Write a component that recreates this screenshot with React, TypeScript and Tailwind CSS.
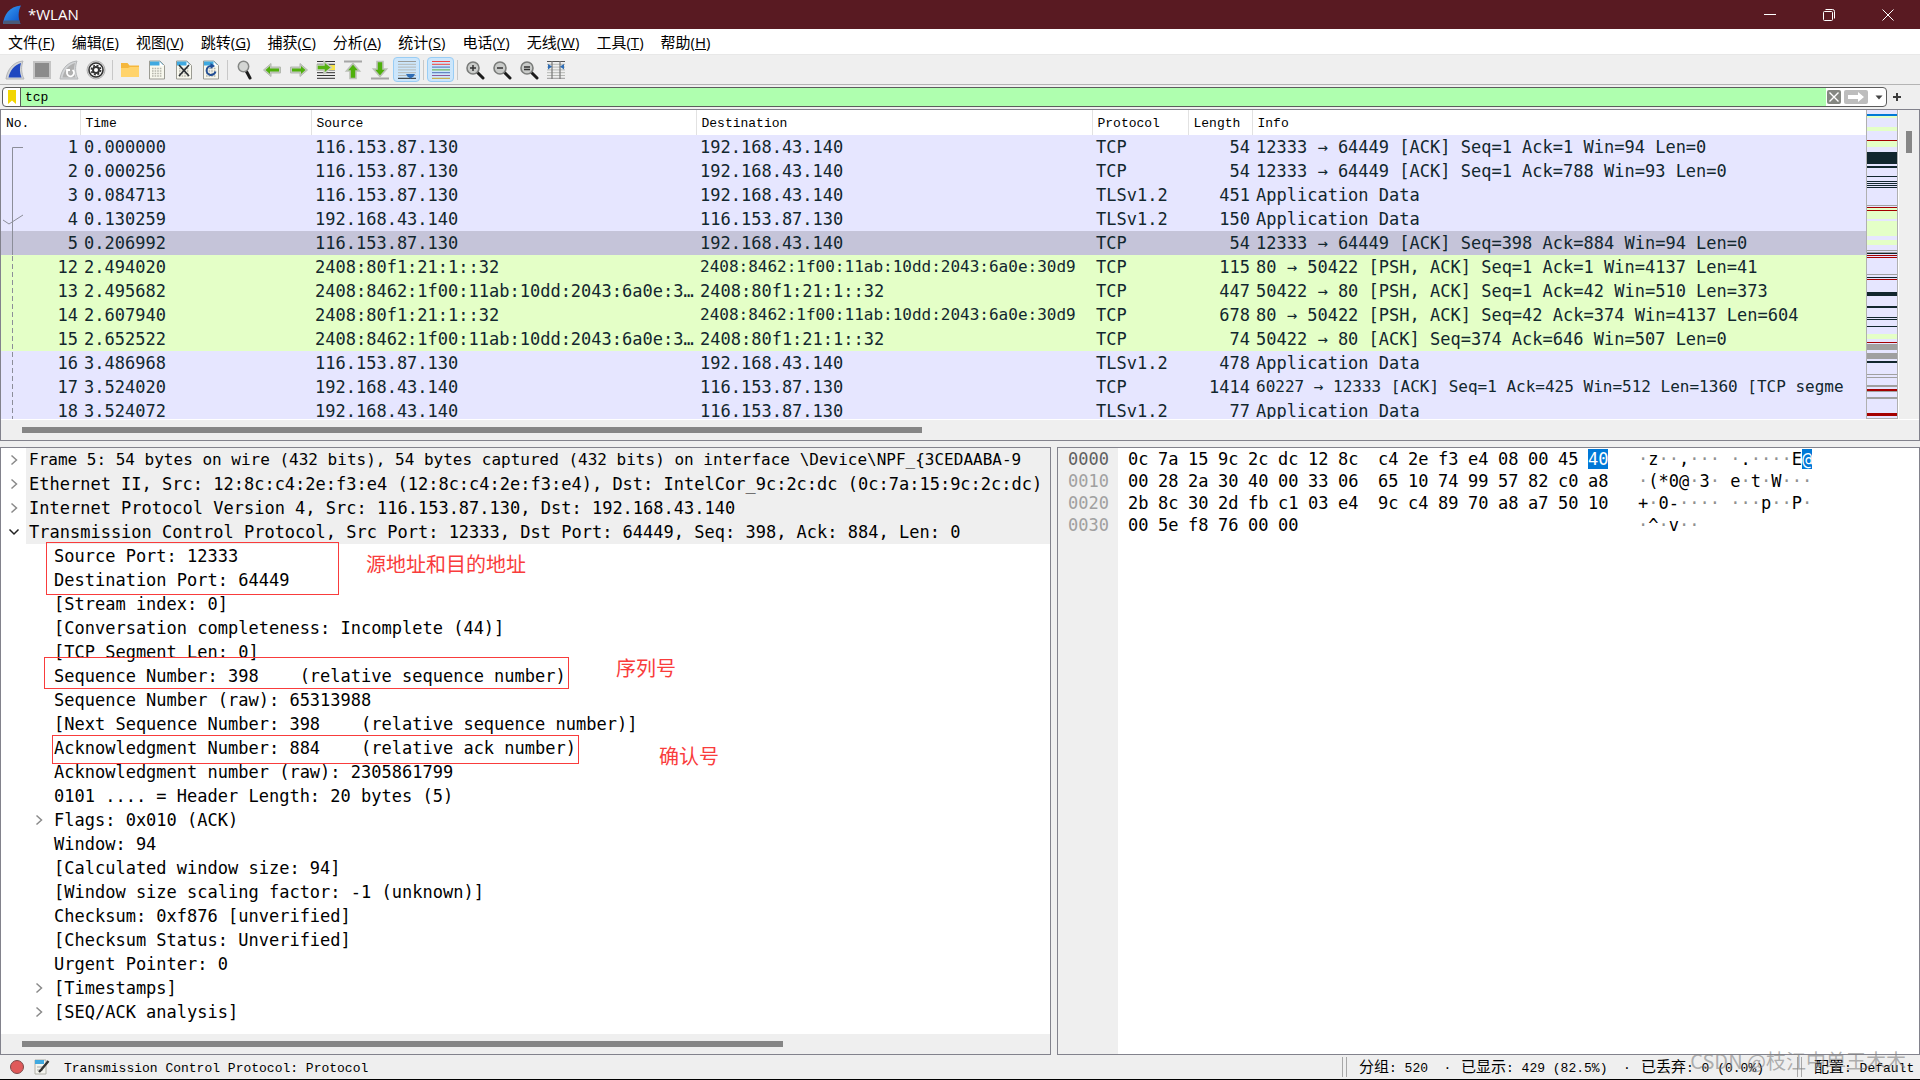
import type { ReactNode } from "react";

const MONO = "font-['DejaVu_Sans_Mono','Noto_Sans_CJK_SC',monospace]";
const SONG = "font-['Liberation_Mono','Noto_Sans_CJK_SC',monospace] text-[13px]";

const menus = [
  ["文件", "F"],
  ["编辑", "E"],
  ["视图", "V"],
  ["跳转", "G"],
  ["捕获", "C"],
  ["分析", "A"],
  ["统计", "S"],
  ["电话", "Y"],
  ["无线", "W"],
  ["工具", "T"],
  ["帮助", "H"],
];

const V4A = "116.153.87.130";
const V4B = "192.168.43.140";
const V6A = "2408:80f1:21:1::32";
const V6B = "2408:8462:1f00:11ab:10dd:2043:6a0e:30d9";
const V6B_CUT = "2408:8462:1f00:11ab:10dd:2043:6a0e:3…";

type Packet = [number, string, string, string, string, number, string];

const packets: Packet[] = [
  [1, "0.000000", V4A, V4B, "TCP", 54, "12333 → 64449 [ACK] Seq=1 Ack=1 Win=94 Len=0"],
  [2, "0.000256", V4A, V4B, "TCP", 54, "12333 → 64449 [ACK] Seq=1 Ack=788 Win=93 Len=0"],
  [3, "0.084713", V4A, V4B, "TLSv1.2", 451, "Application Data"],
  [4, "0.130259", V4B, V4A, "TLSv1.2", 150, "Application Data"],
  [5, "0.206992", V4A, V4B, "TCP", 54, "12333 → 64449 [ACK] Seq=398 Ack=884 Win=94 Len=0"],
  [12, "2.494020", V6A, V6B, "TCP", 115, "80 → 50422 [PSH, ACK] Seq=1 Ack=1 Win=4137 Len=41"],
  [13, "2.495682", V6B_CUT, V6A, "TCP", 447, "50422 → 80 [PSH, ACK] Seq=1 Ack=42 Win=510 Len=373"],
  [14, "2.607940", V6A, V6B, "TCP", 678, "80 → 50422 [PSH, ACK] Seq=42 Ack=374 Win=4137 Len=604"],
  [15, "2.652522", V6B_CUT, V6A, "TCP", 74, "50422 → 80 [ACK] Seq=374 Ack=646 Win=507 Len=0"],
  [16, "3.486968", V4A, V4B, "TLSv1.2", 478, "Application Data"],
  [17, "3.524020", V4B, V4A, "TCP", 1414, "60227 → 12333 [ACK] Seq=1 Ack=425 Win=512 Len=1360 [TCP segme"],
  [18, "3.524072", V4B, V4A, "TLSv1.2", 77, "Application Data"],
];

const rowColor = (no: number) => {
  if (no === 5) return "bg-[#c5c4d9]";
  if (no >= 12 && no <= 15) return "bg-[#e4ffc7]";
  return "bg-[#e6e6ff]";
};

// the longest strings go one size down so they fit their column
const cellSize = (cell: string | number) => {
  const len = String(cell).length;
  return len === 39 || len > 60 ? "text-base" : "text-[17px]";
};

// [level, expander, text]
const tree: [number, string, string][] = [
  [0, ">", "Frame 5: 54 bytes on wire (432 bits), 54 bytes captured (432 bits) on interface \\Device\\NPF_{3CEDAABA-9"],
  [0, ">", "Ethernet II, Src: 12:8c:c4:2e:f3:e4 (12:8c:c4:2e:f3:e4), Dst: IntelCor_9c:2c:dc (0c:7a:15:9c:2c:dc)"],
  [0, ">", "Internet Protocol Version 4, Src: 116.153.87.130, Dst: 192.168.43.140"],
  [0, "v", "Transmission Control Protocol, Src Port: 12333, Dst Port: 64449, Seq: 398, Ack: 884, Len: 0"],
  [1, "", "Source Port: 12333"],
  [1, "", "Destination Port: 64449"],
  [1, "", "[Stream index: 0]"],
  [1, "", "[Conversation completeness: Incomplete (44)]"],
  [1, "", "[TCP Segment Len: 0]"],
  [1, "", "Sequence Number: 398    (relative sequence number)"],
  [1, "", "Sequence Number (raw): 65313988"],
  [1, "", "[Next Sequence Number: 398    (relative sequence number)]"],
  [1, "", "Acknowledgment Number: 884    (relative ack number)"],
  [1, "", "Acknowledgment number (raw): 2305861799"],
  [1, "", "0101 .... = Header Length: 20 bytes (5)"],
  [1, ">", "Flags: 0x010 (ACK)"],
  [1, "", "Window: 94"],
  [1, "", "[Calculated window size: 94]"],
  [1, "", "[Window size scaling factor: -1 (unknown)]"],
  [1, "", "Checksum: 0xf876 [unverified]"],
  [1, "", "[Checksum Status: Unverified]"],
  [1, "", "Urgent Pointer: 0"],
  [1, ">", "[Timestamps]"],
  [1, ">", "[SEQ/ACK analysis]"],
];

const hexRows = [
  ["0000", "0c 7a 15 9c 2c dc 12 8c", "c4 2e f3 e4 08 00 45 40", "·z··,··· ·.····E@"],
  ["0010", "00 28 2a 30 40 00 33 06", "65 10 74 99 57 82 c0 a8", "·(*0@·3· e·t·W···"],
  ["0020", "2b 8c 30 2d fb c1 03 e4", "9c c4 89 70 a8 a7 50 10", "+·0-···· ···p··P·"],
  ["0030", "00 5e f8 76 00 00", "", "·^·v··"],
];

const G = "#e4ffc7";
const D = "#12272e";
const R = "#a40000";
const Y = "#a0a0a0";
// minimap stripes: [y, height, colour]
const stripes: [number, number, string][] = [
  [4, 2, "#0078d7"], [6, 2, G], [17, 4, G], [30, 1, R], [31, 6, G], [42, 12, D], [56, 2, D],
  [66, 1, D], [71, 1, D], [73, 1, D], [75, 1, D], [77, 1, D], [95, 1, Y], [97, 1, R], [98, 2, G],
  [100, 1, R], [101, 8, G], [111, 15, G], [130, 5, G], [140, 1, Y], [142, 1, Y], [143, 1, D],
  [145, 1, R], [147, 1, R], [164, 1, Y], [167, 1, D], [169, 1, R], [182, 4, D], [196, 2, D],
  [207, 1, D], [209, 1, D], [216, 1, D], [224, 5, G], [232, 1, R], [234, 6, Y], [243, 6, Y],
  [251, 2, D], [264, 1, Y], [267, 1, Y], [275, 2, Y], [279, 2, R], [281, 1, Y], [287, 2, Y], [303, 3, R],
];

const Svg = ({ children }: { children: ReactNode }) => (
  <svg viewBox="0 0 20 20" className="size-5" fill="none" aria-hidden="true">
    {children}
  </svg>
);

const Fin = ({ fill }: { fill: string }) => (
  <>
    <path d="M1 19C2 11 7 2 18 1C16 6 16 13 19 19Z" fill="#d2d4d6" stroke="#b4b6b8" strokeWidth="1" strokeLinejoin="round" />
    <path d="M3.500 17.500C5 11 9 5 16 3C14.500 8 14.500 12.500 16.500 17.500Z" fill={fill} />
  </>
);

const Doc = () => (
  <>
    <path d="M2.500 1H13L17.500 5.500V19H2.500Z" fill="#f8f8ee" stroke="#9b9b93" />
    <path d="M3 1.500H13L16 4.500V5.500H3Z" fill="#3fa9e0" />
    <path d="M12.500 1.500V6H17Z" fill="#fff" />
  </>
);

const DocBits = () => (
  <path d="M5 8.500H15M5 11H15M5 13.500H15M5 16H15" stroke="#b5b5ab" strokeWidth="1.500" strokeDasharray="1.600 1" />
);

const Arrow = ({ turn = 0 }: { turn?: number }) => (
  <g transform={`rotate(${turn} 10 10)`} strokeLinejoin="round">
    <path d="M1.500 10L9 3.500V7H18.500V13H9V16.500Z" fill="#c4c9c0" stroke="#b4b9b0" />
    <path d="M3.500 10L8 6V8.500H17V11.500H8V14Z" fill="#4fb00c" />
  </g>
);

const Lens = ({ children }: { children?: ReactNode }) => (
  <>
    <path d="M12.500 12.500L18 18" stroke="#1c1c1c" strokeWidth="3" strokeLinecap="round" />
    <circle cx="8" cy="8" r="6" fill="#c9cbc9" stroke="#7a7c7a" strokeWidth="1.600" />
    {children}
  </>
);

const Lines = ({ colors }: { colors: string[] }) => (
  <>
    {colors.map((c, i) => (
      <path key={i} d={`M1 ${1.5 + i * 2.8}H19`} stroke={c} strokeWidth="1" />
    ))}
  </>
);

const gray = "#a5a5a5";

const tools: { label: string; on?: boolean; sep?: boolean; icon: ReactNode }[] = [
  { label: "开始捕获", icon: <Fin fill="#1f47c0" /> },
  { label: "停止捕获", icon: <rect x="2" y="2" width="16" height="16" fill="#8b8b8b" stroke="#c4c4c4" strokeWidth="2" /> },
  {
    label: "重新开始捕获",
    icon: (
      <>
        <Fin fill="#b0b0b0" />
        <path d="M13.500 10A3.500 3.500 0 1 1 8.500 11M8 13.500V10H11" stroke="#fff" strokeWidth="1.800" />
      </>
    ),
  },
  {
    label: "捕获选项",
    sep: true,
    icon: (
      <>
        <circle cx="10" cy="10" r="9" fill="#d8d8d8" stroke="#b0b0b0" />
        <circle cx="10" cy="10" r="7" fill="#fff" stroke="#333" strokeWidth="1.600" />
        <circle cx="10" cy="10" r="4.600" stroke="#333" strokeWidth="1.600" strokeDasharray="2 1.612" />
        <circle cx="10" cy="10" r="3" fill="#fff" stroke="#333" strokeWidth="2" />
      </>
    ),
  },
  {
    label: "打开",
    icon: (
      <>
        <path d="M1 3H7.500L9.500 5.500H19V17H1Z" fill="#f5b73c" />
        <path d="M1 8H8L10 7H19V17H1Z" fill="#ffd36b" />
      </>
    ),
  },
  { label: "保存", icon: <><Doc /><DocBits /></> },
  { label: "关闭", icon: <><Doc /><DocBits /><path d="M5 5L15 16M15 5L5 16" stroke="#2a2f33" strokeWidth="1.700" /></> },
  {
    label: "重新加载",
    sep: true,
    icon: (
      <>
        <Doc />
        <DocBits />
        <path d="M10 6A4.500 4.500 0 1 0 14.500 11.500" stroke="#234f95" strokeWidth="2" />
        <path d="M9.500 3L14 6L9.500 9Z" fill="#234f95" />
      </>
    ),
  },
  {
    label: "查找分组",
    icon: (
      <>
        <path d="M11.500 11.500L15 18" stroke="#1c1c1c" strokeWidth="3" strokeLinecap="round" />
        <circle cx="8.500" cy="6.500" r="5.200" fill="#d4d6d4" stroke="#858785" strokeWidth="1.500" />
      </>
    ),
  },
  { label: "上一个分组", icon: <Arrow /> },
  { label: "下一个分组", icon: <Arrow turn={180} /> },
  {
    label: "转到分组",
    icon: (
      <>
        <Lines colors={["#333", "#333", "#333", "#333", "#333", "#333", "#333"]} />
        <path d="M12 5H19V10H12Z" fill="#f6e34a" />
        <path d="M1 5H8V1.500L15.500 7.500L8 13.500V10H1Z" fill="#55b212" stroke="#c8cec2" strokeWidth="1.500" />
      </>
    ),
  },
  { label: "第一个分组", icon: <><path d="M1 1.500H19" stroke={gray} strokeWidth="2" /><path d="M10 3.500L16.500 11H13V18.500H7V11H3.500Z" fill="#4fb00c" stroke="#bcc1b8" strokeWidth="1.600" /></> },
  { label: "最后一个分组", icon: <><path d="M1 18.500H19" stroke={gray} strokeWidth="2" /><path d="M10 16.500L16.500 9H13V1.500H7V9H3.500Z" fill="#4fb00c" stroke="#bcc1b8" strokeWidth="1.600" /></> },
  {
    label: "自动滚动",
    on: true,
    sep: true,
    icon: (
      <>
        <Lines colors={["#999b98", "#b6b8b4", "#b6b8b4", "#b6b8b4", "#b6b8b4", "#b6b8b4", "#222"]} />
        <path d="M9 14H18L16.500 16.500L13.500 18.500L10.500 16.500Z" fill="#2f6db5" />
      </>
    ),
  },
  {
    label: "着色分组列表",
    on: true,
    sep: true,
    icon: <Lines colors={["#ef4444", "#ef4444", "#4a6fb5", "#5bae3c", "#4a6fb5", "#8a5a9a", "#c9a227"]} />,
  },
  { label: "放大", icon: <Lens><path d="M8 5V11M5 8H11" stroke="#333" strokeWidth="1.500" /></Lens> },
  { label: "缩小", icon: <Lens><path d="M5 8H11" stroke="#333" strokeWidth="1.500" /></Lens> },
  { label: "正常大小", icon: <Lens><path d="M5 7H11M5 9.500H11" stroke="#333" strokeWidth="1.500" /></Lens> },
  {
    label: "调整列宽",
    icon: (
      <>
        <Lines colors={["#555", "#b6b8b4", "#b6b8b4", "#b6b8b4", "#b6b8b4", "#b6b8b4", "#999"]} />
        <path d="M6 1V19M14 1V19" stroke="#777" strokeWidth="1.200" />
        <path d="M2 4L6 6.500L2 9.500ZM18 4L14 6.500L18 9.500Z" fill="#2f6db5" />
      </>
    ),
  },
];

const TitleBar = () => (
  <header className="flex h-[29px] shrink-0 items-center bg-[#591a22] text-white">
    <svg viewBox="0 0 20 20" className="ml-0.5 size-5" aria-hidden="true">
      <defs>
        <linearGradient id="fin" x1="0" y1="0" x2="1" y2="1">
          <stop offset="0" stopColor="#3aa0f5" />
          <stop offset="1" stopColor="#0a50c8" />
        </linearGradient>
      </defs>
      <path d="M1 19C2 10 7 1.500 19 0.500C16 6 16 13 18.500 19Z" fill="url(#fin)" />
      <path d="M1 19C1.500 17.500 1.800 16.500 2.500 15.500H17.500L18.500 19Z" fill="#4a5a78" />
    </svg>
    <h1 className="ml-1.5 flex-1 font-['Open_Sans',sans-serif] text-[15px]">*WLAN</h1>
    <button aria-label="最小化" className="flex h-full w-[59px] items-center justify-center">
      <svg viewBox="0 0 12 12" className="size-3" stroke="#fff" fill="none"><path d="M0 5.500H12" /></svg>
    </button>
    <button aria-label="还原" className="flex h-full w-[59px] items-center justify-center">
      <svg viewBox="0 0 12 12" className="size-3" stroke="#fff" fill="none">
        <rect x="0.500" y="2.500" width="9" height="9" rx="1" />
        <path d="M2.500 0.500H9.500Q11.500 0.500 11.500 2.500V9.500" />
      </svg>
    </button>
    <button aria-label="关闭" className="mr-[3px] flex h-full w-[59px] items-center justify-center">
      <svg viewBox="0 0 12 12" className="size-3" stroke="#fff" fill="none"><path d="M0.500 0.500L11.500 11.500M11.500 0.500L0.500 11.500" /></svg>
    </button>
  </header>
);

const MenuBar = () => (
  <nav className="flex h-[26px] shrink-0 items-center gap-px border-b border-[#e8e8e8] bg-white font-['Open_Sans','Noto_Sans_CJK_SC',sans-serif] text-[15px] text-black">
    {menus.map(([name, key]) => (
      <button key={key} className="whitespace-nowrap px-2 leading-5">
        {name}(<u>{key}</u>)
      </button>
    ))}
  </nav>
);

const Toolbar = () => (
  <div className="flex h-[30px] shrink-0 items-center border-b border-[#b4b4b4] bg-[#efefef] pl-px">
    {tools.map((t) => (
      <div key={t.label} className="flex items-center">
        <button
          aria-label={t.label}
          className={
            t.on
              ? "flex h-[25px] w-[27px] items-center justify-center rounded-sm border border-[#99cdf5] bg-[#cce6fb]"
              : "flex h-[25px] w-[27px] items-center justify-center"
          }
        >
          <Svg>{t.icon}</Svg>
        </button>
        {t.sep && <div className="mx-[3px] h-5 w-px bg-[#c8c8c8]" />}
      </div>
    ))}
  </div>
);

const FilterBar = () => (
  <div className="flex h-6 shrink-0 items-center bg-[#efefef] pl-0.5">
    <div className="flex h-5 flex-1 items-center overflow-hidden rounded-sm border border-[#5c5c5c] bg-white">
      <button aria-label="书签" className="flex h-full w-[18px] items-center justify-center border-r border-[#5c5c5c]">
        <svg viewBox="0 0 8 14" className="h-3.5 w-2"><path d="M0 0H8V14L4 10.500L0 14Z" fill="#f2d500" /></svg>
      </button>
      <input
        aria-label="显示过滤器"
        defaultValue="tcp"
        className={`h-full min-w-0 flex-1 bg-[#afffaf] pl-1 text-black outline-none ${SONG}`}
      />
      <button aria-label="清除" className="ml-px flex h-3.5 w-3.5 items-center justify-center rounded-xs bg-[#858782]">
        <svg viewBox="0 0 10 10" className="size-2.5" stroke="#fff" strokeWidth="1.400"><path d="M0.500 0.500L9.500 9.500M9.500 0.500L0.500 9.500" /></svg>
      </button>
      <button aria-label="应用" className="ml-[3px] flex h-3.5 w-6 items-center justify-center rounded-xs bg-[#bdbdbd]">
        <svg viewBox="0 0 16 10" className="h-2.5 w-4"><path d="M0 3H10V0L16 5L10 10V7H0Z" fill="#fff" /></svg>
      </button>
      <button aria-label="历史" className="flex h-full w-[18px] items-center justify-center pl-1">
        <svg viewBox="0 0 8 5" className="h-[5px] w-2"><path d="M0.500 0.500H7.500L4 4.500Z" fill="#444" /></svg>
      </button>
    </div>
    <button aria-label="添加" className="flex h-5 w-[33px] items-center pl-1.5">
      <svg viewBox="0 0 8 8" className="size-2" stroke="#3c3c3c" strokeWidth="2"><path d="M4 0V8M0 4H8" /></svg>
    </button>
  </div>
);

const PacketList = () => (
  <section className="flex min-h-0 flex-[330] flex-col border border-[#82828c] bg-[#efefef]">
    <div className="flex min-h-0 flex-1">
      <div className="relative min-w-0 flex-1 overflow-hidden bg-white">
        <table className="w-full table-fixed border-collapse">
          <colgroup>
            <col className="w-[79px]" />
            <col className="w-[231px]" />
            <col className="w-[385px]" />
            <col className="w-[396px]" />
            <col className="w-[96px]" />
            <col className="w-[64px]" />
            <col />
          </colgroup>
          <thead>
            <tr className={`h-[25px] text-left text-black ${SONG}`}>
              {["No.", "Time", "Source", "Destination", "Protocol", "Length", "Info"].map((h) => (
                <th key={h} className="border-r border-[#e2e2e2] p-0 pl-[5px] pt-0.5 font-normal last:border-r-0">
                  {h}
                </th>
              ))}
            </tr>
          </thead>
          <tbody className={`text-[#12272e] ${MONO}`}>
            {packets.map((p) => (
              <tr key={p[0]} className={`h-6 ${rowColor(p[0])}`}>
                {p.map((cell, i) => (
                  <td
                    key={i}
                    className={`overflow-hidden whitespace-nowrap p-0 leading-6 ${cellSize(cell)} ${
                      i === 0 || i === 5 ? "pr-0.5 text-right" : "pl-1"
                    }`}
                  >
                    {cell}
                  </td>
                ))}
              </tr>
            ))}
          </tbody>
        </table>
        {/* conversation marker */}
        <svg className="absolute left-0 top-0 h-[309px] w-6" fill="none" stroke="#8c8e99" aria-hidden="true">
          <path d="M22 37.500H11.500V145" />
          <path d="M11.500 146V309" strokeDasharray="5 3" />
          <path d="M2 110L8 114L22 105" />
        </svg>
      </div>
      <svg viewBox="0 0 30 308" preserveAspectRatio="none" className="w-8 border border-t-0 border-[#b0b0b0] bg-[#e6e6ff]" shapeRendering="crispEdges" aria-hidden="true">
        {stripes.map(([y, h, c]) => (
          <rect key={y} x="0" y={y} width="30" height={h} fill={c} />
        ))}
      </svg>
      <div className="flex w-[21px] justify-center border-l border-white pt-[21px]">
        <div className="h-[22px] w-1.5 bg-[#868686]" />
      </div>
    </div>
    <div className="flex h-[21px] shrink-0 items-center border-t border-white px-[21px]">
      <div className="h-1.5 w-[48%] bg-[#868686]" />
    </div>
  </section>
);

const Chevron = ({ open }: { open: boolean }) => (
  <svg viewBox="0 0 12 12" className="size-3" fill="none" stroke={open ? "#222" : "#8a8a8a"} strokeWidth="1.500">
    <path d={open ? "M1.500 3.500L6 8L10.500 3.500" : "M3.500 1.500L8.500 6L3.500 10.500"} />
  </svg>
);

const Note = ({ box, label, text }: { box: string; label: string; text: string }) => (
  <>
    <div className={`absolute border border-[#f93c3c] ${box}`} />
    <p className={`absolute whitespace-nowrap font-['Noto_Sans_CJK_SC',sans-serif] text-xl leading-6 text-[#f93c3c] ${label}`}>{text}</p>
  </>
);

const PacketDetails = () => (
  <section className="flex min-w-0 flex-[1049] flex-col overflow-hidden border border-[#82828c] bg-white">
    <div className="relative min-h-0 flex-1 overflow-hidden">
      <ul className={`text-black ${MONO}`}>
        {tree.map(([level, exp, text]) => (
          <li key={text} className={level ? "flex h-6 pl-[25px]" : "flex h-6"}>
            <span className="flex w-[25px] shrink-0 items-center justify-center">
              {exp && (
                <button aria-label={exp === "v" ? "折叠" : "展开"}>
                  <Chevron open={exp === "v"} />
                </button>
              )}
            </span>
            <span
              className={`flex-1 whitespace-pre pl-[3px] leading-6 ${level ? "" : "bg-[#efefef]"} ${
                text.length > 100 ? "text-base" : "text-[17px]"
              }`}
            >
              {text}
            </span>
          </li>
        ))}
      </ul>
      <Note box="left-[45px] top-[94px] h-[53px] w-[293px]" label="left-[365px] top-[104px]" text="源地址和目的地址" />
      <Note box="left-[43px] top-[209px] h-8 w-[525px]" label="left-[615px] top-[208px]" text="序列号" />
      <Note box="left-[51px] top-[287px] h-[29px] w-[527px]" label="left-[658px] top-[296px]" text="确认号" />
    </div>
    <div className="flex h-5 shrink-0 items-center bg-[#efefef] pl-[21px]">
      <div className="h-1.5 w-[74%] bg-[#868686]" />
    </div>
  </section>
);

const Bytes = ({ value, mark }: { value: string; mark: boolean }) => (
  <span className="flex w-[250px] shrink-0">
    {value.split(" ").map((b, i) => (
      <span key={i} className="w-[30px]">
        <span className={mark && b === "40" ? "bg-[#0078d7] text-white" : ""}>{b}</span>
      </span>
    ))}
  </span>
);

const PacketBytes = () => (
  <section className={`flex min-w-0 flex-[861] overflow-hidden border border-[#82828c] bg-white text-[17px] ${MONO}`}>
    <div className="w-[60px] shrink-0 bg-[#efefef] pl-2.5">
      {hexRows.map(([offset], i) => (
        <p key={offset} className={i ? "h-[22px] leading-[22px] text-[#a0a0a0]" : "h-[22px] leading-[22px] text-[#606060]"}>
          {offset}
        </p>
      ))}
    </div>
    <div className="pl-2.5 text-black">
      {hexRows.map(([offset, left, right, ascii], row) => (
        <p key={offset} className="flex h-[22px] leading-[22px]">
          <Bytes value={left} mark={false} />
          <Bytes value={right} mark={row === 0} />
          <span className="whitespace-pre pl-2.5">
            {ascii.split("").map((c, i) => (
              <span key={i} className={c === "·" ? "text-[#909090]" : row === 0 && c === "@" ? "bg-[#0078d7] text-white" : ""}>
                {c}
              </span>
            ))}
          </span>
        </p>
      ))}
    </div>
  </section>
);

const Grip = () => <div className="h-5 w-[5px] shrink-0 border-x border-[#a8a8a8]" />;

const StatusBar = () => (
  <footer className={`relative flex h-[25px] shrink-0 items-center border-b border-black bg-[#efefef] text-black ${SONG}`}>
    <button aria-label="专家信息" className="ml-2.5 size-3.5 rounded-full border border-[#7d4a4a] bg-[#e05a5a]" />
    <button aria-label="捕获文件注释" className="ml-2.5 size-4">
      <svg viewBox="0 0 16 16" className="size-4" fill="none">
        <path d="M1 1H12V15H1Z" fill="#f4f4ee" stroke="#b0b0a8" />
        <path d="M1 1H10V5H1Z" fill="#3fa9e0" />
        <path d="M3 8H9M3 11H9" stroke="#aaa" />
        <path d="M14.500 2L7 11L5 13" stroke="#333" strokeWidth="2.400" />
      </svg>
    </button>
    <p className="ml-3.5 flex-1 whitespace-nowrap pt-1">Transmission Control Protocol: Protocol</p>
    <Grip />
    <p className="flex w-[450px] whitespace-nowrap pl-3 pt-1">
      <span className="w-[102px]"><span className="text-[15px]">分组</span>: 520&nbsp; ·</span>
      <span className="w-[180px]"><span className="text-[15px]">已显示</span>: 429 (82.5%)&nbsp; ·</span>
      <span><span className="text-[15px]">已丢弃</span>: 0 (0.0%)</span>
    </p>
    <Grip />
    <p className="w-[118px] whitespace-nowrap pl-3 pt-1"><span className="text-[15px]">配置</span>: Default</p>
    <p className="absolute bottom-1.5 right-3.5 whitespace-nowrap font-['Noto_Sans_CJK_SC',sans-serif] text-xl leading-6 text-[#80808099]">
      CSDN @枝江中单王木木
    </p>
  </footer>
);

export default function App() {
  return (
    <div className="flex h-screen flex-col overflow-hidden bg-[#efefef]">
      <TitleBar />
      <MenuBar />
      <Toolbar />
      <FilterBar />
      <main className="flex min-h-0 flex-1 flex-col gap-1.5">
        <PacketList />
        <div className="flex min-h-0 flex-[608] gap-1.5">
          <PacketDetails />
          <PacketBytes />
        </div>
      </main>
      <StatusBar />
    </div>
  );
}
